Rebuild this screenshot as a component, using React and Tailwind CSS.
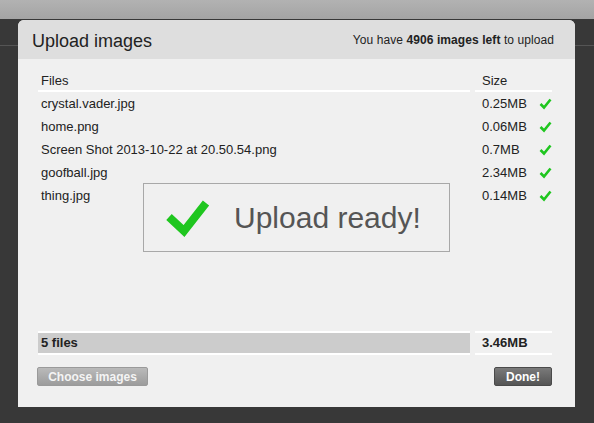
import React from "react";

const files = [
  { name: "crystal.vader.jpg", size: "0.25MB" },
  { name: "home.png", size: "0.06MB" },
  { name: "Screen Shot 2013-10-22 at 20.50.54.png", size: "0.7MB" },
  { name: "goofball.jpg", size: "2.34MB" },
  { name: "thing.jpg", size: "0.14MB" },
];

const SmallCheck = () => (
  <svg width="13" height="12" viewBox="0 0 13 12" className="block">
    <polyline points="1.5,6 5,9.5 11.5,1.5" fill="none" stroke="#1fc61f" strokeWidth="2.6" strokeLinejoin="miter" />
  </svg>
);

const BigCheck = () => (
  <svg width="48" height="44" viewBox="0 0 48 44" className="block shrink-0">
    <polyline points="6,21 21,35 43,7" fill="none" stroke="#1fc61f" strokeWidth="8" strokeLinejoin="miter" />
  </svg>
);

export default function App() {
  return (
    <div
      className="relative w-[594px] h-[423px] overflow-hidden bg-[#383838] text-[#222]"
      style={{ fontFamily: '"Liberation Sans", Arial, sans-serif' }}
    >
      {/* page behind the modal */}
      <div className="h-[19px] bg-gradient-to-b from-[#b2b2b2] to-[#a4a4a4]" />
      <div className="h-[27px] border-b border-[#555]" />

      {/* modal */}
      <div className="absolute left-[18px] top-[20px] w-[557px] h-[387px] flex flex-col bg-[#f0f0f0] rounded-t-[6px] overflow-hidden">
        <div className="h-[39px] shrink-0 flex items-center justify-between pl-[14px] pr-[21px] bg-[#dedede]">
          <h1 className="text-[18px] leading-none pt-[2px]">Upload images</h1>
          <p className="text-[12px] tracking-[0.08px]">
            You have <b>4906 images left</b> to upload
          </p>
        </div>

        <div className="relative flex-1 flex flex-col pl-[20px] pr-[23px] pt-[12px] pb-[21px]">
          {/* table */}
          <div className="flex gap-[5px] text-[13px]">
            <div className="w-[432px] h-[21px] border-b-2 border-white pl-[3px] flex items-center pt-[1px]">Files</div>
            <div className="w-[77px] h-[21px] border-b-2 border-white pl-[7px] flex items-center pt-[1px]">Size</div>
          </div>
          {files.map((f) => (
            <div key={f.name} className="flex gap-[5px] h-[23px] items-center text-[13px]">
              <div className="w-[432px] pl-[3px]">{f.name}</div>
              <div className="w-[77px] pl-[7px] flex items-center justify-between">
                <span>{f.size}</span>
                <SmallCheck />
              </div>
            </div>
          ))}

          <div className="flex-1" />

          {/* totals */}
          <div className="flex gap-[5px] text-[13px] font-bold">
            <div className="w-[432px] h-[24px] border-y-2 border-white bg-[#cccccc] pl-[3px] flex items-center">5 files</div>
            <div className="w-[77px] h-[24px] border-y-2 border-white pl-[7px] flex items-center">3.46MB</div>
          </div>

          {/* buttons */}
          <div className="mt-[12px] flex justify-between">
            <button className="w-[111px] h-[19px] -ml-[1px] rounded-[2px] border border-[#9a9a9a] bg-gradient-to-b from-[#bababa] to-[#9c9c9c] text-[12px] font-bold text-[#f4f4f4] leading-none">
              Choose images
            </button>
            <button className="w-[58px] h-[19px] rounded-[2px] border border-[#4a4a4a] bg-gradient-to-b from-[#7a7a7a] to-[#555] text-[12px] font-bold text-white leading-none">
              Done!
            </button>
          </div>

          {/* overlay */}
          <div className="absolute left-[125px] top-[124px] w-[307px] h-[69px] border border-[#a8a8a8] bg-[#f0f0f0] flex items-center pl-[19px]">
            <BigCheck />
            <span className="ml-[23px] text-[30px] text-[#555] leading-none">Upload ready!</span>
          </div>
        </div>
      </div>
    </div>
  );
}
